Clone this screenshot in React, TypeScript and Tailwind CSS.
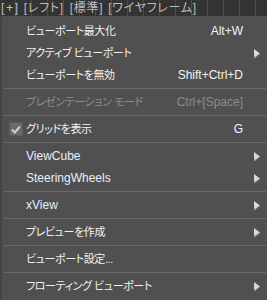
import React from 'react';

type Item =
  | { kind: 'sep' }
  | { kind: 'item'; label: string; shortcut?: string; sub?: boolean; disabled?: boolean; checked?: boolean; latin?: boolean };

const items: Item[] = [
  { kind: 'item', label: 'ビューポート最大化', shortcut: 'Alt+W' },
  { kind: 'item', label: 'アクティブ ビューポート', sub: true },
  { kind: 'item', label: 'ビューポートを無効', shortcut: 'Shift+Ctrl+D' },
  { kind: 'sep' },
  { kind: 'item', label: 'プレゼンテーション モード', shortcut: 'Ctrl+[Space]', disabled: true },
  { kind: 'sep' },
  { kind: 'item', label: 'グリッドを表示', shortcut: 'G', checked: true },
  { kind: 'sep' },
  { kind: 'item', label: 'ViewCube', sub: true, latin: true },
  { kind: 'item', label: 'SteeringWheels', sub: true, latin: true },
  { kind: 'sep' },
  { kind: 'item', label: 'xView', sub: true, latin: true },
  { kind: 'sep' },
  { kind: 'item', label: 'プレビューを作成', sub: true },
  { kind: 'sep' },
  { kind: 'item', label: 'ビューポート設定...' },
  { kind: 'sep' },
  { kind: 'item', label: 'フローティング ビューポート', sub: true },
];

function SubArrow() {
  return (
    <svg width="6" height="9" viewBox="0 0 6 9" className="block">
      <path d="M0 0 L6 4.5 L0 9 Z" fill="#d8d8d8" />
      <path d="M0 9 L6 4.5 L6 5.5 L1.5 9 Z" fill="#4a86d8" />
      <path d="M0 6 L0 9 L1.5 9 Z" fill="#6f9fe0" />
    </svg>
  );
}

function CheckBox() {
  return (
    <div className="w-[14px] h-[14px] bg-[#6a6a6a] border border-[#5a5a5a] flex items-center justify-center">
      <svg width="10" height="9" viewBox="0 0 10 9">
        <path d="M1 4.5 L3.8 7.5 L9 1.5" stroke="#d0d0d0" strokeWidth="2" fill="none" />
      </svg>
    </div>
  );
}

export default function App() {
  return (
    <div className="w-[267px] h-[300px] bg-[#505050] overflow-hidden [font-family:'Liberation_Sans','Noto_Sans_CJK_JP',sans-serif]">
      <div className="h-[17px] bg-[#333333] bg-[repeating-linear-gradient(to_right,transparent_0,transparent_15px,#4c4c4c_15px,#4c4c4c_16px)] border-b border-[#4c4c4c] flex items-center pl-[1px] text-[12px] leading-none text-[#bdbdbd] whitespace-pre tracking-[0.7px] [font-feature-settings:'palt']">
        <span>[</span>
        <span className="text-[#f0d000] px-[1px]">+</span>
        <span>]</span>
        <span className="ml-[5px]">[レフト]</span>
        <span className="ml-[6px]">[標準]</span>
        <span className="ml-[5px]">[ワイヤフレーム]</span>
      </div>
      <div className="h-[283px] border-l-2 border-[#444444] pt-[3px] pr-[1px]">
        {items.map((it, i) =>
          it.kind === 'sep' ? (
            <div key={i} className="h-[5px] flex items-center pl-[2px]">
              <div className="h-px w-full bg-[#6a6a6a]" />
            </div>
          ) : (
            <div key={i} className="h-[22px] flex items-center">
              <div className="w-[24px] flex justify-center pl-[3px]">{it.checked && <CheckBox />}</div>
              <div
                className={`flex-1 leading-none whitespace-pre ${
                  it.latin ? 'text-[12px]' : "text-[11px] tracking-[-0.4px] [font-feature-settings:'palt']"
                } ${it.disabled ? 'text-[#8c8c8c]' : it.latin ? 'text-[#e8eefc]' : 'text-[#f2f2f2]'}`}
              >
                {it.label}
              </div>
              {it.shortcut && (
                <div className={`text-[12px] leading-none pr-[23px] ${it.disabled ? 'text-[#8c8c8c]' : 'text-[#f2f2f2]'}`}>
                  {it.shortcut}
                </div>
              )}
              {it.sub && (
                <div className="pr-[6px]">
                  <SubArrow />
                </div>
              )}
            </div>
          )
        )}
      </div>
    </div>
  );
}
